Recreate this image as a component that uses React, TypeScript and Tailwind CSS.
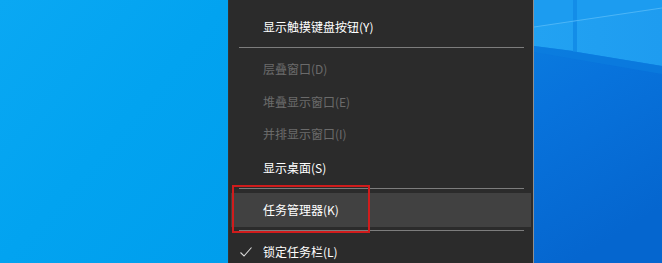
import React from "react";

const font = { fontFamily: '"Noto Sans CJK SC", "Noto Sans", sans-serif' };

function Row({ h, text, disabled }: { h: string; text: string; disabled?: boolean }) {
  return (
    <div className={`${h} flex items-center pl-[34px] text-[12px] ${disabled ? "text-[#6b6b6b]" : "text-white"}`}>
      {text}
    </div>
  );
}

function Sep({ cls }: { cls: string }) {
  return (
    <div className={cls}>
      <div className="ml-[10px] mr-[9px] h-px bg-[#7d7d7d]" />
    </div>
  );
}

export default function App() {
  return (
    <div className="flex w-[662px] h-[263px] overflow-hidden" style={font}>
      <div className="w-[228px] h-full bg-gradient-to-br from-[#0aa8f3] via-[#02a3f0] to-[#009eed]" />
      <div className="relative w-[306px] h-full bg-[#2b2b2b] border-l border-l-[#333333] border-r border-r-[#8f8f8f]">
        <div className="pt-[11px]">
          <Row h="h-[32px]" text="显示触摸键盘按钮(Y)" />
          <Sep cls="pt-[4px] pb-[5px]" />
          <Row h="h-[32px]" text="层叠窗口(D)" disabled />
          <Row h="h-[33px]" text="堆叠显示窗口(E)" disabled />
          <Row h="h-[32px]" text="并排显示窗口(I)" disabled />
          <Row h="h-[35px]" text="显示桌面(S)" />
          <Sep cls="pt-[3px] pb-[4px]" />
          <div className="h-[34px] mx-[2px] bg-[#414141] flex items-center pl-[32px] text-[12px] text-white">
            任务管理器(K)
          </div>
          <Sep cls="pt-[3px] pb-[4px]" />
          <div className="h-[34px] flex items-center pl-[11px] text-[12px] text-white">
            <svg width="12" height="12" viewBox="0 0 12 12" className="mr-[11px]">
              <polyline points="0.5,6.5 4,10 11.5,1.5" fill="none" stroke="#d8d8d8" strokeWidth="1.1" />
            </svg>
            锁定任务栏(L)
          </div>
        </div>
        <div className="absolute left-[3px] top-[185px] w-[138px] h-[48px] border-2 border-[#d01c1c]" />
      </div>
      <div className="flex-1 h-full">
        <svg width="128" height="263" viewBox="0 0 128 263" className="block">
          <defs>
            <linearGradient id="bg" x1="0" y1="0" x2="0.3" y2="1">
              <stop offset="0" stopColor="#0b7fe0" />
              <stop offset="0.4" stopColor="#0873dc" />
              <stop offset="1" stopColor="#0566cf" />
            </linearGradient>
            <linearGradient id="pane" x1="0" y1="0" x2="1" y2="0">
              <stop offset="0" stopColor="#22a2f2" />
              <stop offset="1" stopColor="#1e9cf0" />
            </linearGradient>
          </defs>
          <rect x="0" y="0" width="128" height="263" fill="url(#bg)" />
          <polygon points="0,0 128,0 128,66 43,52 39,51 0,46" fill="url(#pane)" />
          <polygon points="0,0 128,0 128,8 0,27" fill="#1c9cf0" />
          <rect x="39" y="0" width="4" height="52" fill="#138de8" />
          <line x1="0" y1="27" x2="128" y2="8" stroke="#4cb5f6" strokeWidth="1.2" />
          <polygon points="0,46 39,51 43,52 128,66 128,74 0,52" fill="#0c7fe0" opacity="0.6" />
        </svg>
      </div>
    </div>
  );
}
